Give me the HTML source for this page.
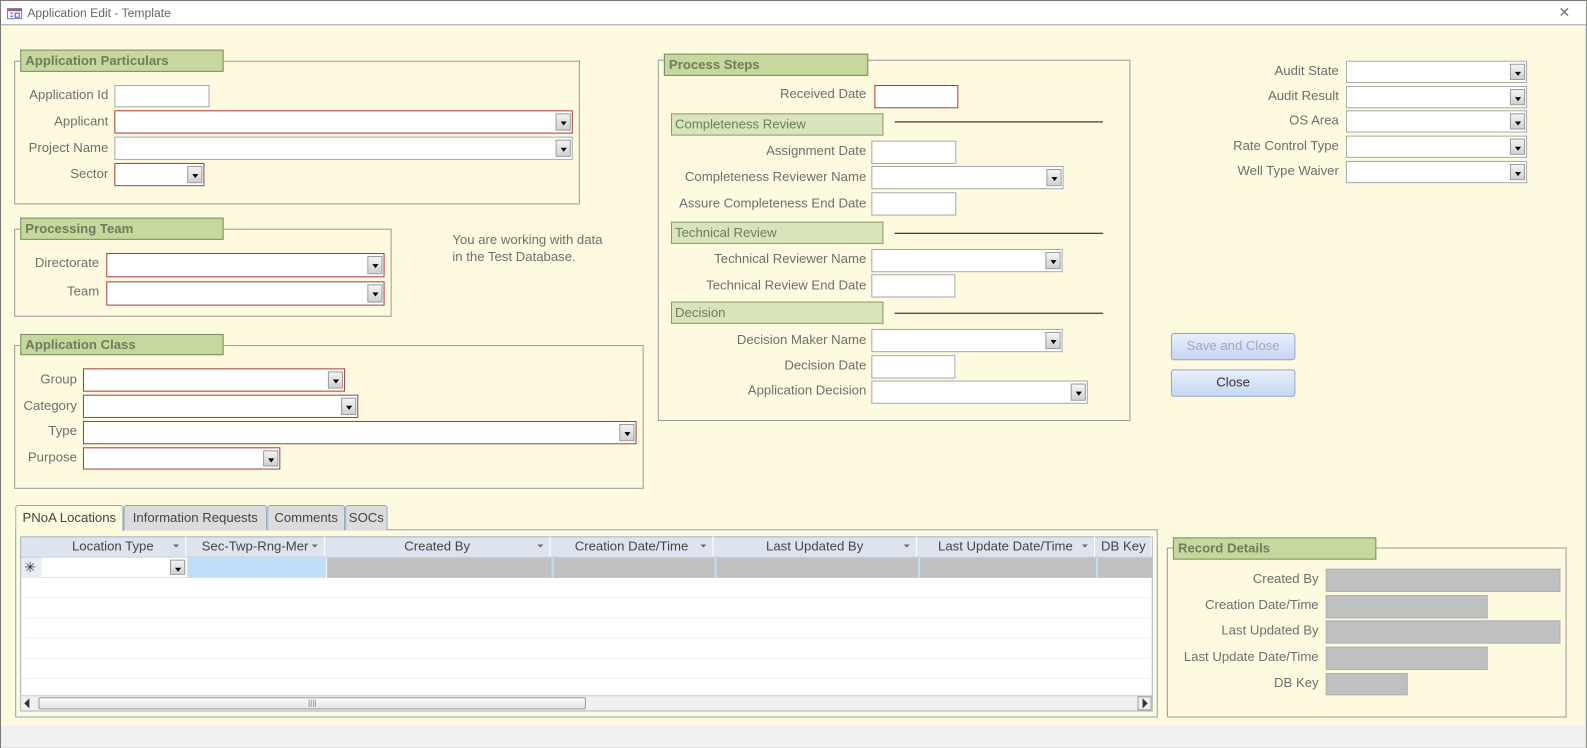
<!DOCTYPE html>
<html><head><meta charset="utf-8"><style>
*{box-sizing:border-box;margin:0;padding:0}
html,body{width:1587px;height:748px;overflow:hidden;background:#fff;font-family:"Liberation Sans",sans-serif}
#w{position:absolute;left:0;top:0;width:1568px;height:739px;transform:scale(1.012);transform-origin:0 0;border:1px solid #7a7a7a;background:#fefadf}
.a{position:absolute}
#tb{left:0;top:0;width:1566px;height:24px;background:#fff;border-bottom:1px solid #a0a0a0;font-size:12px;color:#666}
#bot{left:0;top:716px;width:1566px;height:22px;background:#f0f0f0}
.l{position:absolute;font-size:13px;color:#6e6e6e;text-align:right;white-space:nowrap;line-height:22px}
.t{position:absolute;background:#fff;border:1px solid #a8a8a8}
.r{border-color:#a83c3c}
.dd{position:absolute;right:1px;top:2px;bottom:2px;width:15px;background:linear-gradient(#f4f4f4,#d0d0d0);border:1px solid #999}
.dd:after{content:"";position:absolute;left:4px;top:7px;border-left:3px solid transparent;border-right:3px solid transparent;border-top:4px solid #000}
.g{position:absolute;border:1px solid #9a9a9a}
.h{position:absolute;background:#c6d89e;border:1px solid #7a8c5e;font-size:13px;font-weight:bold;color:#6e7d5c;padding-left:4px;line-height:19px}
.s{position:absolute;background:#d8e4bc;border:1px solid #8a9a6e;font-size:13px;color:#6e7d5c;padding-left:3px;line-height:19px}
.ln{position:absolute;height:1px;background:#111}
.btn{position:absolute;border:1px solid #8fa4c8;border-radius:3px;background:linear-gradient(#e8eefc,#c8d6f2);font-size:13px;text-align:center;line-height:24px}
.gr{position:absolute;background:#c0c0c0;border:1px solid #b0b0b0}
.tab{position:absolute;top:498px;height:25px;border:1px solid #8ea3bd;border-bottom:none;background:#dcdcdc;font-size:13px;color:#444;line-height:24px;text-align:center;border-radius:3px 3px 0 0}
.col{position:absolute;top:529px;height:20px;border-right:1px solid #fff;font-size:13px;color:#444;line-height:20px;text-align:center}
.col i{position:absolute;right:6px;top:8px;border-left:3px solid transparent;border-right:3px solid transparent;border-top:3px solid #666}
</style></head><body><div id="w">
<div class="a" id="tb"><svg class="a" style="left:6px;top:7px" width="15" height="11"><rect x=".5" y=".5" width="14" height="10" fill="#fff" stroke="#5a6ca8"/><rect x="1" y="1" width="13" height="2" fill="#b04a6a"/><path d="M3 5h3M3 8h3M8 5h4v4H8z" stroke="#3a58a8" fill="none"/></svg><span class="a" style="left:26px;top:5px">Application Edit - Template</span><span class="a" style="left:1539px;top:3px;font-size:14px;color:#777">✕</span></div>

<!-- Application Particulars -->
<div class="g" style="left:13px;top:59px;width:559px;height:142px"></div>
<div class="h" style="left:19px;top:48px;width:201px;height:22px">Application Particulars</div>
<div class="l" style="right:1460px;top:82px">Application Id</div><div class="t" style="left:112px;top:83px;width:94px;height:22px"></div>
<div class="l" style="right:1460px;top:108px">Applicant</div><div class="t r" style="left:112px;top:108px;width:453px;height:23px"><div class="dd"></div></div>
<div class="l" style="right:1460px;top:134px">Project Name</div><div class="t" style="left:112px;top:134px;width:453px;height:23px"><div class="dd"></div></div>
<div class="l" style="right:1460px;top:160px">Sector</div><div class="t r" style="left:112px;top:160px;width:89px;height:23px"><div class="dd"></div></div>

<!-- Processing Team -->
<div class="g" style="left:13px;top:225px;width:373px;height:87px"></div>
<div class="h" style="left:19px;top:214px;width:201px;height:22px">Processing Team</div>
<div class="l" style="right:1469px;top:248px">Directorate</div><div class="t r" style="left:104px;top:249px;width:275px;height:24px"><div class="dd"></div></div>
<div class="l" style="right:1469px;top:276px">Team</div><div class="t r" style="left:104px;top:277px;width:275px;height:24px"><div class="dd"></div></div>
<div class="a" style="left:446px;top:227px;font-size:13px;color:#6e6e6e;line-height:17px">You are working with data<br>in the Test Database.</div>

<!-- Application Class -->
<div class="g" style="left:13px;top:340px;width:622px;height:142px"></div>
<div class="h" style="left:19px;top:329px;width:201px;height:21px">Application Class</div>
<div class="l" style="right:1491px;top:363px">Group</div><div class="t r" style="left:81px;top:363px;width:259px;height:23px"><div class="dd"></div></div>
<div class="l" style="right:1491px;top:389px">Category</div><div class="t r" style="left:81px;top:389px;width:272px;height:23px"><div class="dd"></div></div>
<div class="l" style="right:1491px;top:414px">Type</div><div class="t r" style="left:81px;top:415px;width:547px;height:23px"><div class="dd"></div></div>
<div class="l" style="right:1491px;top:440px">Purpose</div><div class="t r" style="left:81px;top:441px;width:195px;height:22px"><div class="dd"></div></div>

<!-- Process Steps -->
<div class="g" style="left:649px;top:58px;width:467px;height:357px"></div>
<div class="h" style="left:655px;top:52px;width:202px;height:22px">Process Steps</div>
<div class="l" style="right:711px;top:81px">Received Date</div><div class="t r" style="left:863px;top:83px;width:83px;height:23px"></div>
<div class="s" style="left:662px;top:111px;width:210px;height:22px">Completeness Review</div><div class="ln" style="left:883px;top:119px;width:206px"></div>
<div class="l" style="right:711px;top:137px">Assignment Date</div><div class="t" style="left:860px;top:138px;width:84px;height:23px"></div>
<div class="l" style="right:711px;top:163px">Completeness Reviewer Name</div><div class="t" style="left:860px;top:163px;width:190px;height:23px"><div class="dd"></div></div>
<div class="l" style="right:711px;top:189px">Assure Completeness End Date</div><div class="t" style="left:860px;top:189px;width:84px;height:23px"></div>
<div class="s" style="left:662px;top:218px;width:210px;height:22px">Technical Review</div><div class="ln" style="left:883px;top:229px;width:206px"></div>
<div class="l" style="right:711px;top:244px">Technical Reviewer Name</div><div class="t" style="left:860px;top:245px;width:189px;height:23px"><div class="dd"></div></div>
<div class="l" style="right:711px;top:270px">Technical Review End Date</div><div class="t" style="left:860px;top:270px;width:83px;height:23px"></div>
<div class="s" style="left:662px;top:297px;width:210px;height:22px">Decision</div><div class="ln" style="left:883px;top:308px;width:206px"></div>
<div class="l" style="right:711px;top:324px">Decision Maker Name</div><div class="t" style="left:860px;top:324px;width:189px;height:23px"><div class="dd"></div></div>
<div class="l" style="right:711px;top:349px">Decision Date</div><div class="t" style="left:860px;top:350px;width:83px;height:23px"></div>
<div class="l" style="right:711px;top:374px">Application Decision</div><div class="t" style="left:860px;top:375px;width:214px;height:23px"><div class="dd"></div></div>

<!-- right combos -->
<div class="l" style="right:244px;top:58px">Audit State</div><div class="t" style="left:1329px;top:59px;width:179px;height:22px"><div class="dd"></div></div>
<div class="l" style="right:244px;top:83px">Audit Result</div><div class="t" style="left:1329px;top:84px;width:179px;height:22px"><div class="dd"></div></div>
<div class="l" style="right:244px;top:107px">OS Area</div><div class="t" style="left:1329px;top:108px;width:179px;height:22px"><div class="dd"></div></div>
<div class="l" style="right:244px;top:132px">Rate Control Type</div><div class="t" style="left:1329px;top:133px;width:179px;height:22px"><div class="dd"></div></div>
<div class="l" style="right:244px;top:157px">Well Type Waiver</div><div class="t" style="left:1329px;top:158px;width:179px;height:22px"><div class="dd"></div></div>

<div class="btn" style="left:1156px;top:328px;width:123px;height:27px;color:#a0a8b8">Save and Close</div>
<div class="btn" style="left:1156px;top:364px;width:123px;height:27px;color:#333">Close</div>

<!-- tabs -->
<div class="a" style="left:14px;top:522px;width:1129px;height:186px;border:1px solid #8ea3bd;background:#fefadf"></div>
<div class="tab" style="left:14px;width:107px;background:#fefadf;height:26px">PNoA Locations</div>
<div class="tab" style="left:121px;width:142px">Information Requests</div>
<div class="tab" style="left:263px;width:77px">Comments</div>
<div class="tab" style="left:340px;width:42px">SOCs</div>

<div class="a" style="left:19px;top:529px;width:1119px;height:173px;background:#fff;border:1px solid #a0a8b8;overflow:hidden">
<div class="a" style="left:0;top:0;width:20px;height:172px;background:#e8edf4"></div>
<div class="a" style="left:0;top:0;width:1120px;height:20px;background:#dde4ef;border-bottom:1px solid #c8d0dc"></div>
<div class="a" style="left:0;top:40px;width:1120px;height:140px;background:repeating-linear-gradient(#fff 0 19px,#eef0f2 19px 20px)"></div>
<div class="a" style="left:20px;top:20px;width:144px;height:20px;background:#fff;border-bottom:1px solid #ddd"><div class="dd" style="right:2px"></div></div>
<div class="a" style="left:164px;top:20px;width:137px;height:20px;background:#bfdcf8"></div>
<div class="a" style="left:302px;top:20px;width:820px;height:20px;background:#c0c0c0"></div>
<div class="a" style="left:524px;top:20px;width:2px;height:20px;background:#bfdcf8"></div>
<div class="a" style="left:685px;top:20px;width:2px;height:20px;background:#bfdcf8"></div>
<div class="a" style="left:886px;top:20px;width:2px;height:20px;background:#bfdcf8"></div>
<div class="a" style="left:1062px;top:20px;width:2px;height:20px;background:#bfdcf8"></div>
<div class="a" style="left:3px;top:21px;font-size:14px;color:#333">✳</div>
<div class="a" style="left:0;top:156px;width:1118px;height:16px;background:#f0f0f0;border-top:1px solid #ccc"></div>
<div class="a" style="left:17px;top:158px;width:541px;height:12px;background:linear-gradient(#fafafa,#e4e4e4);border:1px solid #999;border-radius:2px;font-size:8px;text-align:center;color:#777;line-height:10px">||||</div>
<div class="a" style="left:3px;top:159px;border-top:5px solid transparent;border-bottom:5px solid transparent;border-right:5px solid #333"></div>
<div class="a" style="left:1103px;top:157px;width:14px;height:14px;border:1px solid #999;background:#eee"></div>
<div class="a" style="left:1108px;top:159px;border-top:5px solid transparent;border-bottom:5px solid transparent;border-left:5px solid #333"></div>
</div>
<div class="col" style="left:39px;width:144px">Location Type<i></i></div>
<div class="col" style="left:183px;width:137px">Sec-Twp-Rng-Mer<i></i></div>
<div class="col" style="left:320px;width:223px">Created By<i></i></div>
<div class="col" style="left:543px;width:161px">Creation Date/Time<i></i></div>
<div class="col" style="left:704px;width:201px">Last Updated By<i></i></div>
<div class="col" style="left:905px;width:176px">Last Update Date/Time<i></i></div>
<div class="col" style="left:1081px;width:56px;text-align:left;padding-left:6px">DB Key</div>

<!-- Record Details -->
<div class="g" style="left:1152px;top:540px;width:395px;height:168px"></div>
<div class="h" style="left:1158px;top:530px;width:201px;height:22px">Record Details</div>
<div class="l" style="right:264px;top:560px">Created By</div><div class="gr" style="left:1309px;top:561px;width:232px;height:23px"></div>
<div class="l" style="right:264px;top:586px">Creation Date/Time</div><div class="gr" style="left:1309px;top:587px;width:160px;height:23px"></div>
<div class="l" style="right:264px;top:611px">Last Updated By</div><div class="gr" style="left:1309px;top:612px;width:232px;height:23px"></div>
<div class="l" style="right:264px;top:637px">Last Update Date/Time</div><div class="gr" style="left:1309px;top:638px;width:160px;height:23px"></div>
<div class="l" style="right:264px;top:663px">DB Key</div><div class="gr" style="left:1309px;top:664px;width:81px;height:22px"></div>

<div class="a" id="bot"></div>
</div></body></html>
